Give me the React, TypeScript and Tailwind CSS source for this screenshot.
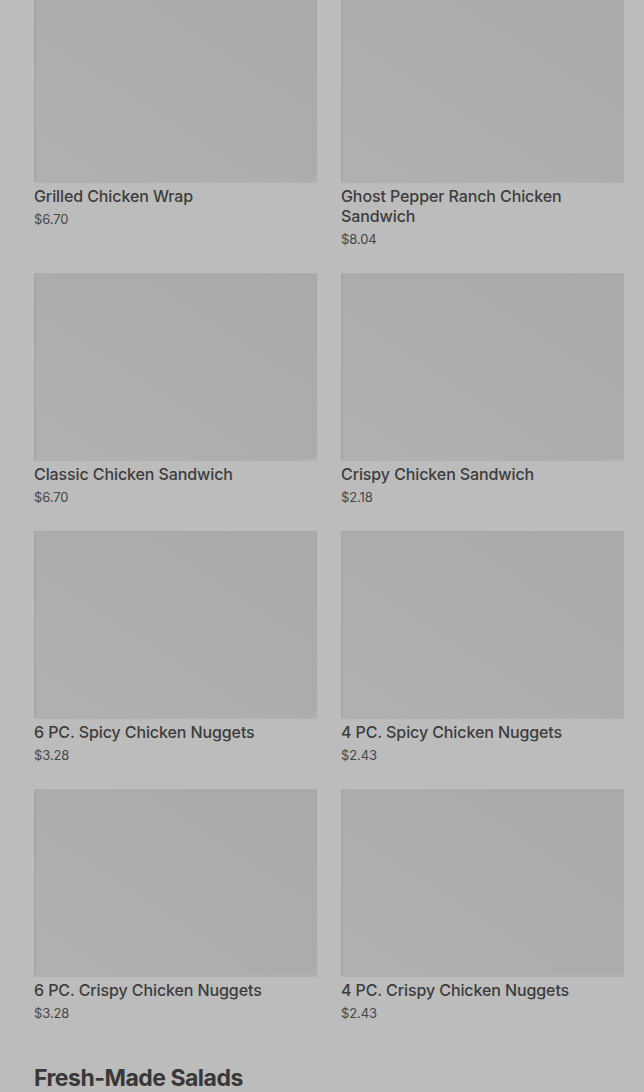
import React from 'react';

interface MenuItem {
  name: string;
  price: string;
}

const items: MenuItem[] = [
  { name: 'Grilled Chicken Wrap', price: '$6.70' },
  { name: 'Ghost Pepper Ranch Chicken Sandwich', price: '$8.04' },
  { name: 'Classic Chicken Sandwich', price: '$6.70' },
  { name: 'Crispy Chicken Sandwich', price: '$2.18' },
  { name: '6 PC. Spicy Chicken Nuggets', price: '$3.28' },
  { name: '4 PC. Spicy Chicken Nuggets', price: '$2.43' },
  { name: '6 PC. Crispy Chicken Nuggets', price: '$3.28' },
  { name: '4 PC. Crispy Chicken Nuggets', price: '$2.43' },
];

const ItemCard: React.FC<{ item: MenuItem }> = ({ item }) => (
  <div className="flex flex-col">
    <div className="h-[188px] w-full bg-gradient-to-tr from-[#b1b1b1] via-[#acacac] to-[#aaaaaa] border-l-2 border-[#a7a7a7] border-b-[3px] border-b-[#b0b0b0]" />
    <div className="mt-[3px] text-[16px] leading-5 font-medium tracking-[-0.1px] text-[#3c3c3c]">{item.name}</div>
    <div className="mt-1 text-[13px] leading-[18px] tracking-[-0.1px] text-[#474747]">{item.price}</div>
  </div>
);

export default function App() {
  return (
    <div className="min-h-[1092px] w-full bg-[#bcbcbc] overflow-hidden font-['Inter',sans-serif]">
      <div className="-mt-[5px] pl-[34px] pr-[20px]">
        <div className="grid grid-cols-2 gap-x-6 gap-y-[25px]">
          {items.map(item => (
            <ItemCard key={item.name} item={item} />
          ))}
        </div>
        <h2 className="mt-10 text-[23px] leading-8 font-bold tracking-[-0.5px] text-[#383838]">
          Fresh-Made Salads
        </h2>
      </div>
    </div>
  );
}
